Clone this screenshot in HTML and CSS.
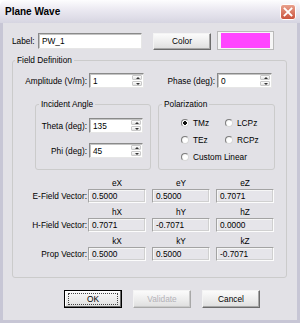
FILE: index.html
```html
<!DOCTYPE html>
<html>
    <head>
        <meta charset="utf-8">
        <title>Plane Wave</title>
        <link rel="stylesheet" href="styles.css">
    </head>
    <body>
      <div class="window">
        <div class="titlebar">
          <span class="title">Plane Wave</span>
          <span class="close">
            <svg width="16" height="16" viewBox="0 0 16 16">
              <defs>
                <linearGradient id="cg" x1="0" y1="0" x2="0" y2="1">
                  <stop offset="0" stop-color="#eaa38f"/>
                  <stop offset="1" stop-color="#c9503a"/>
                </linearGradient>
              </defs>
              <rect x="0.5" y="0.5" width="15" height="15" rx="2.5" fill="url(#cg)" stroke="#fff"/>
              <path d="M4.5 4.5 L11.5 11.5 M11.5 4.5 L4.5 11.5" stroke="#fff" stroke-width="1.8" stroke-linecap="square"/>
            </svg>
          </span>
        </div>

        <div class="client">
          <div class="label-row">
            <span class="lbl label-lbl">Label:</span>
            <div class="edit label-edit">PW_1</div>
            <div class="btn color-btn">Color</div>
            <div class="swatch"><div class="swatch-fill"></div></div>
          </div>

          <fieldset class="group field-def">
            <legend>Field Definition</legend>

            <div class="amp-row">
              <span class="lbl amp-lbl">Amplitude (V/m):</span>
              <div class="edit spin-edit amp-edit"><span class="val">1</span><span class="spin"><i class="up"></i><i class="down"></i></span></div>
              <span class="lbl phase-lbl">Phase (deg):</span>
              <div class="edit spin-edit amp-edit"><span class="val">0</span><span class="spin"><i class="up"></i><i class="down"></i></span></div>
            </div>

            <div class="groups-row">
              <fieldset class="group incident">
                <legend>Incident Angle</legend>
                <div class="angle-row theta-row">
                  <span class="lbl angle-lbl">Theta (deg):</span>
                  <div class="edit spin-edit angle-edit"><span class="val">135</span><span class="spin"><i class="up"></i><i class="down"></i></span></div>
                </div>
                <div class="angle-row phi-row">
                  <span class="lbl angle-lbl">Phi (deg):</span>
                  <div class="edit spin-edit angle-edit"><span class="val">45</span><span class="spin"><i class="up"></i><i class="down"></i></span></div>
                </div>
              </fieldset>

              <fieldset class="group polar">
                <legend>Polarization</legend>
                <div class="radio-row first">
                  <span class="opt"><span class="radio checked"></span>TMz</span>
                  <span class="opt"><span class="radio"></span>LCPz</span>
                </div>
                <div class="radio-row">
                  <span class="opt"><span class="radio"></span>TEz</span>
                  <span class="opt"><span class="radio"></span>RCPz</span>
                </div>
                <div class="radio-row">
                  <span class="opt"><span class="radio"></span>Custom Linear</span>
                </div>
              </fieldset>
            </div>

            <div class="vectors">
              <div class="vec-head"><span>eX</span><span>eY</span><span>eZ</span></div>
              <div class="vec-row">
                <span class="lbl vec-lbl">E-Field Vector:</span>
                <div class="ro">0.5000</div><div class="ro">0.5000</div><div class="ro">0.7071</div>
              </div>
              <div class="vec-head"><span>hX</span><span>hY</span><span>hZ</span></div>
              <div class="vec-row">
                <span class="lbl vec-lbl">H-Field Vector:</span>
                <div class="ro">0.7071</div><div class="ro">-0.7071</div><div class="ro">0.0000</div>
              </div>
              <div class="vec-head"><span>kX</span><span>kY</span><span>kZ</span></div>
              <div class="vec-row">
                <span class="lbl vec-lbl">Prop Vector:</span>
                <div class="ro">0.5000</div><div class="ro">0.5000</div><div class="ro">-0.7071</div>
              </div>
            </div>
          </fieldset>

          <div class="buttons">
            <div class="btn default"><span class="focus">OK</span></div>
            <div class="btn disabled">Validate</div>
            <div class="btn">Cancel</div>
          </div>
        </div>
      </div>
    </body>
</html>
```

FILE: styles.css
```css
  body {
      margin: 0;
      font-family: "Liberation Sans", Arial, sans-serif;
      font-size: 8.3px;
      color: #000;
      background-color: #fff;
  }

  .window {
      width: 300px;
      height: 323px;
      display: flex;
      flex-direction: column;
  }

  .titlebar {
      height: 23px;
      flex: none;
      display: flex;
      align-items: center;
      justify-content: space-between;
      padding: 0 4px 0 5px;
      box-sizing: border-box;
      background: linear-gradient(#fdfdfe, #eceaf2 40%, #d6d5e1);
      border-radius: 6px 6px 0 0;
  }

  .title {
      font-size: 10px;
      font-weight: bold;
      color: #000;
  }

  .close { width: 16px; height: 16px; display: block; }
  .close svg { display: block; }

  .client {
      flex: 1;
      background-color: #e2e1e6;
      border: solid #c7c6d5;
      border-width: 0 3px 3px 3px;
      padding: 8px 0 0 9px;
  }

  .lbl { white-space: nowrap; }

  .label-row {
      display: flex;
      align-items: center;
      height: 19px;
  }
  .label-lbl { width: 26px; }

  .edit {
      box-sizing: border-box;
      background-color: #fff;
      border: 1px solid;
      border-color: #8a8a8a #e6e6e6 #e6e6e6 #8a8a8a;
      box-shadow: inset 1px 1px #c4c4c4;
      padding-left: 3px;
      display: flex;
      align-items: center;
  }
  .label-edit { width: 104px; height: 16px; }

  .btn {
      box-sizing: border-box;
      width: 58px;
      height: 18px;
      display: flex;
      align-items: center;
      justify-content: center;
      background: linear-gradient(#fbfbfb, #ebebeb 60%, #dedede);
      border: 1px solid;
      border-color: #f4f4f4 #6c6c6c #6c6c6c #f4f4f4;
      box-shadow: inset -1px -1px #a7a7a7;
  }
  .color-btn { height: 17px; margin-left: 11px; margin-top: 1px; }

  .swatch {
      box-sizing: border-box;
      width: 57px;
      height: 19px;
      margin-left: 6px;
      border: 1px solid #b9b9b9;
      background-color: #f6f6f6;
      padding: 1px 3px;
  }
  .swatch-fill { height: 100%; background-color: #ff45ff; }

  .group {
      margin: 0;
      padding: 0;
      min-width: 0;
      box-sizing: border-box;
      border: 1px solid #cbcbcb;
      border-radius: 3px;
  }
  .group legend {
      padding: 0 2px;
      margin-left: 3px;
      line-height: 11px;
      font-size: 8.3px;
  }

  .field-def {
      width: 275px;
      height: 223px;
      margin-top: 5px;
  }
  .field-def > legend { margin-left: 2px; }

  .amp-row {
      display: flex;
      align-items: center;
      height: 15px;
      margin-top: 7px;
  }
  .amp-lbl { width: 74px; text-align: right; margin-right: 2px; }
  .phase-lbl { width: 71px; text-align: right; margin-right: 2px; }

  .spin-edit { height: 15px; padding-right: 1px; }
  .amp-edit { width: 55px; }
  .spin-edit .val { flex: 1; }

  .spin {
      width: 10px;
      height: 11px;
      display: flex;
      flex-direction: column;
      gap: 1px;
  }
  .spin i {
      flex: 1;
      position: relative;
      background: linear-gradient(#fdfdfd, #e2e2e2);
      border: 1px solid #c9c9c9;
      border-radius: 1px;
  }
  .spin i::after {
      content: "";
      position: absolute;
      left: 3px;
      top: 1px;
      border-left: 2px solid transparent;
      border-right: 2px solid transparent;
  }
  .spin .up::after { border-bottom: 2px solid #333; }
  .spin .down::after { border-top: 2px solid #333; }

  .groups-row {
      display: flex;
      margin-top: 11px;
      padding-left: 22px;
  }
  .incident { width: 116px; height: 71px; }
  .polar { width: 117px; height: 71px; margin-left: 7px; }

  .angle-row {
      display: flex;
      align-items: center;
      height: 15px;
  }
  .theta-row { margin-top: 8px; }
  .phi-row { margin-top: 10px; }
  .angle-lbl { width: 51px; text-align: right; margin-right: 2px; }
  .angle-edit { width: 54px; }

  .radio-row {
      display: flex;
      align-items: center;
      height: 17px;
      padding-left: 22px;
  }
  .radio-row.first { margin-top: 4px; }
  .opt { display: flex; align-items: center; width: 44px; white-space: nowrap; }
  .radio {
      width: 8px;
      height: 8px;
      box-sizing: border-box;
      border-radius: 50%;
      border: 1px solid;
      border-color: #7d7d7d #d8d8d8 #d8d8d8 #7d7d7d;
      background: radial-gradient(circle at 60% 60%, #fff 40%, #e2e2e2);
      margin-right: 4px;
      flex: none;
  }
  .radio.checked {
      background: radial-gradient(circle, #111 1.6px, #fff 2px);
  }

  .vectors { margin-top: 9px; }

  .vec-head {
      display: flex;
      height: 9px;
      line-height: 9px;
      padding-left: 75px;
      margin-top: 5px;
  }
  .vec-head:first-child { margin-top: 0; }
  .vec-head span { width: 58px; text-align: center; margin-right: 6px; }

  .vec-row {
      display: flex;
      align-items: center;
      margin-top: 1px;
  }
  .vec-lbl { width: 74px; text-align: right; margin-right: 1px; }

  .ro {
      box-sizing: border-box;
      width: 58px;
      height: 14px;
      margin-right: 6px;
      padding-left: 3px;
      display: flex;
      align-items: center;
      background-color: #e6e5ea;
      border: 1px solid;
      border-color: #a3a3a3 #fcfcfc #fcfcfc #a3a3a3;
      box-shadow: inset -1px -1px #d0d0d0, inset 1px 1px #f6f6f6;
  }

  .buttons {
      display: flex;
      gap: 11px;
      margin-top: 12px;
      padding-left: 52px;
  }
  .btn.default {
      border: 1px solid #000;
      box-shadow: inset -1px -1px #6c6c6c, inset 1px 1px #fff;
  }
  .btn .focus {
      box-sizing: border-box;
      width: 50px;
      height: 12px;
      display: flex;
      align-items: center;
      justify-content: center;
      border: 1px dotted #444;
  }
  .btn.disabled {
      color: #b3b2b8;
      border-color: #f4f4f4 #a8a8a8 #a8a8a8 #f4f4f4;
      box-shadow: inset -1px -1px #cacaca;
  }
```
